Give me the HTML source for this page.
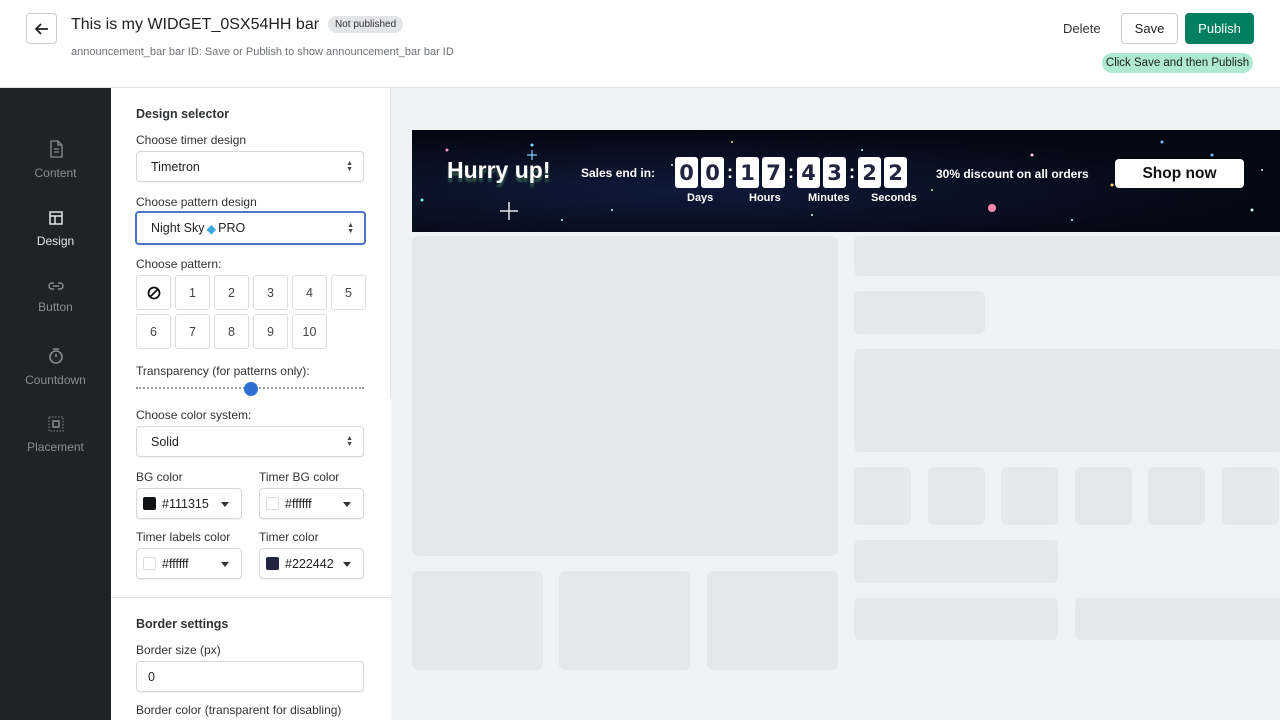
<!DOCTYPE html>
<html><head><meta charset="utf-8"><style>
*{box-sizing:border-box;margin:0;padding:0}
body{width:1280px;height:720px;overflow:hidden;font-family:"Liberation Sans",sans-serif;background:#fff;position:relative;color:#202223}
.a{position:absolute}
.hdr{left:0;top:0;width:1280px;height:88px;background:#fff;border-bottom:1px solid #e3e3e3}
.side{left:0;top:88px;width:111px;height:632px;background:#202324}
.nav{width:111px;text-align:center;color:#8a8d8f;font-size:12px}
.nav svg{display:block;margin:0 auto 8px}
.panel{left:111px;top:88px;width:280px;height:632px;background:#fff}
.lbl{font-size:12px;color:#303335}
.sel{border:1px solid #d6d8da;border-radius:4px;background:#fff;height:31px;font-size:12.5px;padding:0 14px;display:flex;align-items:center;box-shadow:0 1px 1px rgba(0,0,0,.06)}
.arr{position:absolute;right:10px;top:9px;font-size:7px;line-height:6px;color:#444}
.pb{width:35px;height:35px;border:1px solid #dcdedf;border-radius:3px;display:flex;align-items:center;justify-content:center;font-size:12.5px;color:#444}
.sw{width:13px;height:13px;border-radius:2px;margin-right:6px;border:1px solid #ddd}
.tri{position:absolute;right:12px;top:13px;width:0;height:0;border-left:4px solid transparent;border-right:4px solid transparent;border-top:5px solid #333}
.prev{left:391px;top:88px;width:889px;height:632px;background:#f1f2f4}
.ph{background:#e6e7e9;border-radius:6px}
.dg{width:23px;height:31px;background:#fff;border-radius:3px;color:#222442;font-family:"DejaVu Sans",sans-serif;font-weight:bold;font-size:21px;display:flex;align-items:center;justify-content:center}
.tl{color:#fff;font-size:11px;font-weight:bold}
.col{color:#fff;font-weight:bold;font-size:18px}
</style></head><body>
<div class="a hdr">
 <div class="a" style="left:26px;top:13px;width:31px;height:31px;border:1px solid #ccc;border-radius:4px;display:flex;align-items:center;justify-content:center">
  <svg width="16" height="16" viewBox="0 0 16 16"><path d="M14 8H2M7 3L2 8l5 5" stroke="#222" stroke-width="1.8" fill="none"/></svg></div>
 <div class="a" style="left:71px;top:16px;font-size:16px;color:#202223;white-space:nowrap">This is my WIDGET_0SX54HH bar</div>
 <div class="a" style="left:328px;top:16px;background:#e4e5e7;border-radius:10px;font-size:10px;padding:3px 7px;color:#333">Not published</div>
 <div class="a" style="left:71px;top:46px;font-size:11px;color:#6d7175">announcement_bar bar ID: Save or Publish to show announcement_bar bar ID</div>
 <div class="a" style="left:1063px;top:21px;font-size:13px;color:#333">Delete</div>
 <div class="a" style="left:1121px;top:13px;width:57px;height:31px;border:1px solid #c9cccf;border-radius:4px;font-size:13px;display:flex;align-items:center;justify-content:center">Save</div>
 <div class="a" style="left:1185px;top:13px;width:69px;height:31px;background:#008060;border-radius:4px;color:#fff;font-size:13px;display:flex;align-items:center;justify-content:center">Publish</div>
 <div class="a" style="left:1102px;top:53px;width:151px;height:20px;background:#aee9d1;border-radius:10px;font-size:11.5px;display:flex;align-items:center;justify-content:center;color:#202223;white-space:nowrap">Click Save and then Publish</div>
</div>
<div class="a side">
 <div class="a nav" style="top:52px"><svg width="16" height="18" viewBox="0 0 16 18"><path d="M3 1h7l4 4v12H3z M10 1v4h4 M6 9h5M6 12h5" stroke="#8a8d8f" stroke-width="1.3" fill="none"/></svg>Content</div>
 <div class="a nav" style="top:122px;color:#e3e4e5"><svg width="16" height="16" viewBox="0 0 16 16"><path d="M2 2h12v12H2z M2 6h12 M7 6v8" stroke="#e3e4e5" stroke-width="1.5" fill="none"/></svg>Design</div>
 <div class="a nav" style="top:192px"><svg width="16" height="12" viewBox="0 0 16 12"><path d="M6 3H4a3 3 0 0 0 0 6h2M10 3h2a3 3 0 0 1 0 6h-2M5 6h6" stroke="#8a8d8f" stroke-width="1.4" fill="none"/></svg>Button</div>
 <div class="a nav" style="top:259px"><svg width="16" height="18" viewBox="0 0 16 18"><circle cx="8" cy="10" r="6" stroke="#8a8d8f" stroke-width="1.6" fill="none"/><path d="M5 2h6M8 10V7" stroke="#8a8d8f" stroke-width="1.6"/></svg>Countdown</div>
 <div class="a nav" style="top:328px"><svg width="16" height="16" viewBox="0 0 16 16"><rect x="1" y="1" width="14" height="14" stroke="#8a8d8f" stroke-dasharray="1.5 1.5" fill="none"/><rect x="5" y="5" width="6" height="6" stroke="#8a8d8f" stroke-width="1.5" fill="none"/></svg>Placement</div>
</div>
<div class="a panel">
 <div class="a" style="left:25px;top:19px;font-size:12.5px;font-weight:bold;color:#303335">Design selector</div>
 <div class="a lbl" style="left:25px;top:45px">Choose timer design</div>
 <div class="a sel" style="left:25px;top:63px;width:228px">Timetron<span class="arr">▲<br>▼</span></div>
 <div class="a lbl" style="left:25px;top:107px">Choose pattern design</div>
 <div class="a sel" style="left:24px;top:123px;width:231px;height:34px;border:2px solid #4a73c9">Night Sky <span style="color:#3aa7e0;margin:0 2px">◆</span> PRO<span class="arr" style="top:10px">▲<br>▼</span></div>
 <div class="a lbl" style="left:25px;top:169px">Choose pattern:</div>
 <div class="a" style="left:25px;top:187px;display:grid;grid-template-columns:repeat(6,35px);gap:4px">
  <div class="pb"><svg width="14" height="14" viewBox="0 0 14 14"><circle cx="7" cy="7" r="5.5" stroke="#111" stroke-width="1.8" fill="none"/><path d="M3 11L11 3" stroke="#111" stroke-width="1.8"/></svg></div>
  <div class="pb">1</div><div class="pb">2</div><div class="pb">3</div><div class="pb">4</div><div class="pb">5</div>
  <div class="pb">6</div><div class="pb">7</div><div class="pb">8</div><div class="pb">9</div><div class="pb">10</div>
 </div>
 <div class="a lbl" style="left:25px;top:276px">Transparency (for patterns only):</div>
 <div class="a" style="left:25px;top:299px;width:228px;border-top:2px dotted #999"></div>
 <div class="a" style="left:133px;top:294px;width:14px;height:14px;border-radius:50%;background:#2f6fd1"></div>
 <div class="a lbl" style="left:25px;top:320px">Choose color system:</div>
 <div class="a sel" style="left:25px;top:338px;width:228px">Solid<span class="arr">▲<br>▼</span></div>
 <div class="a lbl" style="left:25px;top:382px">BG color</div>
 <div class="a lbl" style="left:148px;top:382px">Timer BG color</div>
 <div class="a sel" style="left:25px;top:400px;width:106px;padding:0 6px"><span class="sw" style="background:#111315;border-color:#111315"></span>#111315<span class="tri"></span></div>
 <div class="a sel" style="left:148px;top:400px;width:105px;padding:0 6px"><span class="sw" style="background:#fff"></span>#ffffff<span class="tri"></span></div>
 <div class="a lbl" style="left:25px;top:442px">Timer labels color</div>
 <div class="a lbl" style="left:148px;top:442px">Timer color</div>
 <div class="a sel" style="left:25px;top:460px;width:106px;padding:0 6px"><span class="sw" style="background:#fff"></span>#ffffff<span class="tri"></span></div>
 <div class="a sel" style="left:148px;top:460px;width:105px;padding:0 6px"><span class="sw" style="background:#222442;border-color:#222442"></span>#222442<span class="tri"></span></div>
 <div class="a" style="left:0;top:509px;width:280px;border-top:1px solid #e3e3e3"></div>
 <div class="a" style="left:25px;top:529px;font-size:12.5px;font-weight:bold;color:#303335">Border settings</div>
 <div class="a lbl" style="left:25px;top:555px">Border size (px)</div>
 <div class="a sel" style="left:25px;top:573px;width:228px;padding:0 11px">0</div>
 <div class="a lbl" style="left:25px;top:615px">Border color (transparent for disabling)</div>
</div>
<div class="a" style="left:390px;top:88px;width:5px;height:310px;background:#e4e4e4"></div>
<div class="a prev">
 <div class="a ph" style="left:21px;top:148px;width:426px;height:320px"></div>
 <div class="a ph" style="left:463px;top:148px;width:430px;height:40px"></div>
 <div class="a ph" style="left:463px;top:203px;width:131px;height:43px"></div>
 <div class="a ph" style="left:463px;top:261px;width:430px;height:103px"></div>
 <div class="a ph" style="left:463px;top:379px;width:57px;height:58px"></div>
 <div class="a ph" style="left:537px;top:379px;width:57px;height:58px"></div>
 <div class="a ph" style="left:610px;top:379px;width:57px;height:58px"></div>
 <div class="a ph" style="left:684px;top:379px;width:57px;height:58px"></div>
 <div class="a ph" style="left:757px;top:379px;width:57px;height:58px"></div>
 <div class="a ph" style="left:831px;top:379px;width:57px;height:58px"></div>
 <div class="a ph" style="left:463px;top:452px;width:204px;height:43px"></div>
 <div class="a ph" style="left:463px;top:510px;width:204px;height:42px"></div>
 <div class="a ph" style="left:684px;top:510px;width:210px;height:42px"></div>
 <div class="a ph" style="left:21px;top:483px;width:131px;height:99px"></div>
 <div class="a ph" style="left:168px;top:483px;width:131px;height:99px"></div>
 <div class="a ph" style="left:316px;top:483px;width:131px;height:99px"></div>
</div>
<div class="a" style="left:412px;top:130px;width:868px;height:102px;background:radial-gradient(ellipse at 30% 60%,#0f1a3a,#050812 70%);overflow:hidden">
 <svg class="a" style="left:0;top:0" width="868" height="102">
  <g fill="#cfe">
   <circle cx="35" cy="20" r="1.5" fill="#f9c"/><circle cx="120" cy="15" r="1.5" fill="#7df"/><circle cx="200" cy="80" r="1" /><circle cx="260" cy="35" r="1"/><circle cx="320" cy="12" r="1" fill="#fd8"/><circle cx="580" cy="78" r="4" fill="#f8a"/><circle cx="620" cy="25" r="1.5" fill="#fcd"/><circle cx="700" cy="55" r="1.5" fill="#fd7"/><circle cx="750" cy="12" r="1.5" fill="#7bf"/><circle cx="800" cy="25" r="1.5" fill="#7bf"/><circle cx="850" cy="40" r="1"/><circle cx="10" cy="70" r="1.5" fill="#6fd"/><circle cx="450" cy="20" r="1"/><circle cx="520" cy="60" r="1" fill="#9f9"/><circle cx="660" cy="90" r="1"/><circle cx="840" cy="80" r="1.5"/><circle cx="400" cy="85" r="1"/><circle cx="150" cy="90" r="1"/>
  </g>
  <path d="M88 81h18M97 72v18" stroke="#fff" stroke-width="1.5" opacity=".9"/>
  <path d="M115 25h10M120 20v10" stroke="#8cf" stroke-width="1.2"/>
 </svg>
 <div class="a" style="left:35px;top:27px;font-size:23px;font-weight:bold;color:#fff;text-shadow:0 4px 2px rgba(120,200,120,.4)">Hurry up!</div>
 <div class="a" style="left:169px;top:36px;font-size:12px;font-weight:bold;color:#fff">Sales end in:</div>
 <div class="a" style="left:263px;top:27px;display:flex;gap:3px;align-items:center">
  <div class="dg">0</div><div class="dg">0</div><span class="col">:</span>
  <div class="dg">1</div><div class="dg">7</div><span class="col">:</span>
  <div class="dg">4</div><div class="dg">3</div><span class="col">:</span>
  <div class="dg">2</div><div class="dg">2</div>
 </div>
 <div class="a tl" style="left:275px;top:62px">Days</div>
 <div class="a tl" style="left:337px;top:62px">Hours</div>
 <div class="a tl" style="left:396px;top:62px">Minutes</div>
 <div class="a tl" style="left:459px;top:62px">Seconds</div>
 <div class="a" style="left:524px;top:37px;font-size:12px;font-weight:bold;color:#fff">30% discount on all orders</div>
 <div class="a" style="left:703px;top:29px;width:129px;height:29px;background:#fff;border-radius:4px;display:flex;align-items:center;justify-content:center;font-size:15.5px;font-weight:bold;color:#111">Shop now</div>
</div>
</body></html>
